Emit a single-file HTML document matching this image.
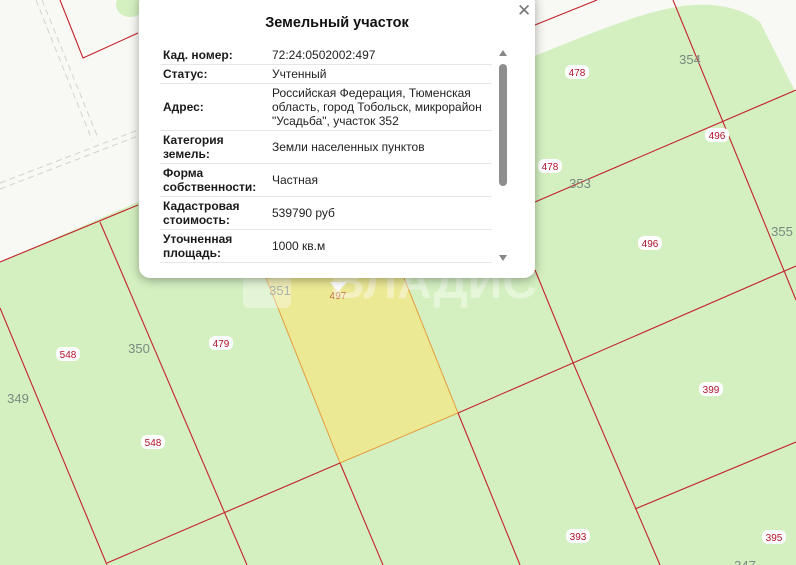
<!DOCTYPE html>
<html><head><meta charset="utf-8"><style>
html,body{margin:0;padding:0;width:796px;height:565px;overflow:hidden;font-family:"Liberation Sans",Arial,sans-serif;}
#map{position:absolute;left:0;top:0}
.pop{position:absolute;left:139px;top:-8px;width:396px;height:286px;background:#fff;border-radius:11px;box-shadow:0 2px 10px rgba(0,0,0,.35);}
.title{position:absolute;left:0;width:100%;top:23px;text-align:center;font-weight:bold;font-size:14.5px;color:#111}
.x{position:absolute;left:378px;top:9px;font-size:17px;color:#777}
.row{position:absolute;left:21px;width:332px;border-bottom:1px solid #e6e6e6;font-size:12px;color:#222;line-height:14px}
.row .l{position:absolute;left:3px;font-weight:bold;color:#1a1a1a}
.row .v{position:absolute;left:112px}
.sb{position:absolute;left:360px;top:72px;width:8px;height:122px;background:#8e8e8e;border-radius:4px}
</style></head><body>
<svg id="map" width="796" height="565" viewBox="0 0 796 565">
<rect width="796" height="565" fill="#f8f8f4"/>
<path d="M0,262 L138,202 L537,55 C600,30 650,8 693,5 C720,3 745,10 760,22 L796,93 L796,565 L0,565Z" fill="#d4f0c1"/>
<ellipse cx="130" cy="5" rx="14" ry="12" fill="#d4f0c1"/>
<g stroke="#d2d2ce" stroke-width="1" stroke-dasharray="6,4" fill="none">
<line x1="36" y1="0" x2="92" y2="140"/><line x1="42" y1="0" x2="98" y2="138"/>
<line x1="0" y1="183" x2="138" y2="130"/><line x1="0" y1="189" x2="138" y2="136"/>
</g>
<path d="M266,278 L400,268 L458,413 L340,463Z" fill="#ece995" stroke="#e59a3c" stroke-width="1"/>
<g stroke="#c4232b" stroke-width="1.1" fill="none">
<polyline points="60,0 83,58 138,33"/>
<line x1="530" y1="27" x2="597" y2="0"/>
<line x1="0" y1="262" x2="138" y2="205"/>
<line x1="100" y1="222" x2="247" y2="565"/>
<line x1="0" y1="308" x2="107" y2="565"/>
<line x1="107" y1="563" x2="340" y2="463"/>
<line x1="458" y1="413" x2="796" y2="266"/>
<line x1="340" y1="463" x2="383" y2="565"/>
<line x1="458" y1="413" x2="520" y2="565"/>
<polyline points="535,270 574,365 660,565"/>
<line x1="535" y1="202" x2="796" y2="90"/>
<line x1="673" y1="0" x2="796" y2="300"/>
<line x1="635" y1="509" x2="796" y2="442"/>
</g>
<g font-family="Liberation Sans,Arial,sans-serif" font-size="10" fill="#b0102a" text-anchor="middle">
<g fill="#fff"><rect x="565" y="65" width="24" height="14" rx="6"/><rect x="705" y="128" width="24" height="14" rx="6"/><rect x="538" y="159" width="24" height="14" rx="6"/><rect x="638" y="236" width="24" height="14" rx="6"/><rect x="56" y="347" width="24" height="14" rx="6"/><rect x="209" y="336" width="24" height="14" rx="6"/><rect x="141" y="435" width="24" height="14" rx="6"/><rect x="699" y="382" width="24" height="14" rx="6"/><rect x="566" y="529" width="24" height="14" rx="6"/><rect x="762" y="530" width="24" height="14" rx="6"/></g>
<text x="577" y="76">478</text><text x="717" y="139">496</text><text x="550" y="170">478</text><text x="650" y="247">496</text>
<text x="68" y="358">548</text><text x="221" y="347">479</text><text x="153" y="446">548</text><text x="711" y="393">399</text>
<text x="578" y="540">393</text><text x="774" y="541">395</text>
</g>
<g font-family="Liberation Sans,Arial,sans-serif" font-size="13" fill="#7a8a80" text-anchor="middle">
<text x="690" y="64">354</text><text x="580" y="188">353</text><text x="782" y="236">355</text><text x="139" y="353">350</text><text x="18" y="403">349</text><text x="280" y="295">351</text><text x="745" y="570">347</text>
</g>
<text x="338" y="299" font-size="10" fill="#c0603a" text-anchor="middle" font-family="Liberation Sans,Arial,sans-serif">497</text>
<rect x="243" y="258" width="48" height="50" rx="6" fill="#fff" opacity=".35"/>
<text x="330" y="298" font-size="48" font-weight="bold" fill="#fff" opacity=".4" font-family="Liberation Sans,Arial,sans-serif">ВЛАДИС</text>
<path d="M330,282 L347,282 L338,292Z" fill="#fff"/>
</svg>
<div class="pop">
<div class="title">Земельный участок</div>
<div class="x">✕</div>
<div class="row" style="top:56px;height:16px"><span class="l">Кад. номер:</span><span class="v">72:24:0502002:497</span></div>
<div class="row" style="top:75px;height:16px"><span class="l">Статус:</span><span class="v">Учтенный</span></div>
<div class="row" style="top:94px;height:44px"><span class="l" style="top:14px">Адрес:</span><span class="v">Российская Федерация, Тюменская<br>область, город Тобольск, микрорайон<br>"Усадьба", участок 352</span></div>
<div class="row" style="top:141px;height:30px"><span class="l">Категория<br>земель:</span><span class="v" style="top:7px">Земли населенных пунктов</span></div>
<div class="row" style="top:174px;height:30px"><span class="l">Форма<br>собственности:</span><span class="v" style="top:7px">Частная</span></div>
<div class="row" style="top:207px;height:30px"><span class="l">Кадастровая<br>стоимость:</span><span class="v" style="top:7px">539790 руб</span></div>
<div class="row" style="top:240px;height:30px"><span class="l">Уточненная<br>площадь:</span><span class="v" style="top:7px">1000 кв.м</span></div>
<div style="position:absolute;left:360px;top:58px;width:0;height:0;border-left:4px solid transparent;border-right:4px solid transparent;border-bottom:6px solid #888"></div>
<div class="sb"></div>
<div style="position:absolute;left:360px;top:263px;width:0;height:0;border-left:4px solid transparent;border-right:4px solid transparent;border-top:6px solid #888"></div>
</div>
</body></html>
